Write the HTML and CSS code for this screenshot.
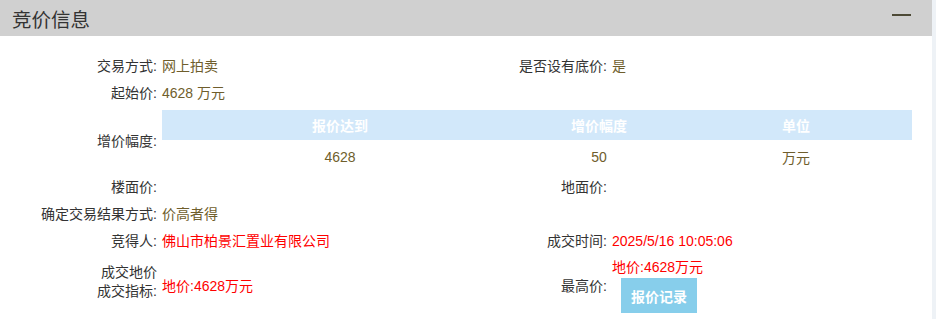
FILE: index.html
```html
<!DOCTYPE html>
<html lang="zh-CN">
<head>
  <meta charset="UTF-8">
  <title>竞价信息</title>
  <link rel="stylesheet" href="styles.css">
</head>
<body>
  <div class="painel">
    <div class="painel-topo">
      <h2>竞价信息</h2>
      <span class="recolher"></span>
    </div>

    <div class="info">
      <div class="rotulo">交易方式:</div>
      <div class="valor">网上拍卖</div>
      <div class="rotulo">是否设有底价:</div>
      <div class="valor">是</div>

      <div class="rotulo">起始价:</div>
      <div class="valor">4628 万元</div>
      <div class="rotulo"></div>
      <div class="valor"></div>

      <div class="rotulo rotulo-tabela">增价幅度:</div>
      <div class="valor-tabela">
        <table class="tabela-preco">
          <thead>
            <tr>
              <th class="col-1">报价达到</th>
              <th class="col-2">增价幅度</th>
              <th class="col-3">单位</th>
            </tr>
          </thead>
          <tbody>
            <tr>
              <td>4628</td>
              <td>50</td>
              <td>万元</td>
            </tr>
          </tbody>
        </table>
      </div>

      <div class="rotulo">楼面价:</div>
      <div class="valor"></div>
      <div class="rotulo">地面价:</div>
      <div class="valor"></div>

      <div class="rotulo">确定交易结果方式:</div>
      <div class="valor">价高者得</div>
      <div class="rotulo"></div>
      <div class="valor"></div>

      <div class="rotulo">竞得人:</div>
      <div class="valor destaque">佛山市柏景汇置业有限公司</div>
      <div class="rotulo">成交时间:</div>
      <div class="valor destaque">2025/5/16 10:05:06</div>

      <div class="rotulo rotulo-duplo">成交地价<br>成交指标:</div>
      <div class="valor destaque">地价:4628万元</div>
      <div class="rotulo">最高价:</div>
      <div class="valor maior">
        <span class="destaque">地价:4628万元</span>
        <button type="button" class="btn-registro">报价记录</button>
      </div>
    </div>
  </div>
</body>
</html>
```

FILE: styles.css
```css
body {
  margin: 0;
  font-family: "Liberation Sans", "Noto Sans CJK SC", sans-serif;
  font-size: 14px;
  color: #333;
  background-color: #eef2f6;
}

.painel {
  width: 932px;
  height: 319px;
  background-color: white;
  overflow: hidden;
}

.painel-topo {
  display: flex;
  justify-content: space-between;
  align-items: center;
  height: 36px;
  padding: 0 21px 0 12px;
  background-color: #d0d0d0;
}

.painel-topo h2 {
  margin: 0;
  font-size: 19.5px;
  font-weight: normal;
  color: #333;
}

.recolher {
  display: block;
  width: 19px;
  height: 2px;
  margin-top: -6px;
  background-color: #4d4a36;
}

.info {
  display: grid;
  grid-template-columns: 162px 300px 150px 300px;
  padding-top: 17px;
}

.rotulo {
  padding: 4px 5px 4px 0;
  line-height: 19px;
  display: flex;
  align-items: center;
  justify-content: flex-end;
  text-align: right;
}

.valor {
  padding: 4px 0;
  line-height: 19px;
  color: #6f5e2c;
  display: flex;
  align-items: center;
}

.destaque {
  color: #ff0000;
}

.rotulo-tabela {
  padding-top: 6px;
}

.valor-tabela {
  grid-column: 2 / 5;
  padding: 3px 0 0;
}

.tabela-preco {
  width: 750px;
  border-collapse: collapse;
}

.tabela-preco th {
  height: 30px;
  padding: 0;
  background-color: #d2e8fa;
  color: white;
  font-weight: bold;
}

.tabela-preco td {
  height: 34px;
  padding: 0;
  text-align: center;
  color: #6f5e2c;
}

.col-1 {
  width: 356px;
}

.col-2 {
  width: 162px;
}

.rotulo-duplo {
  padding-top: 0;
  padding-bottom: 8px;
}

.maior {
  flex-direction: column;
  align-items: flex-start;
  padding-top: 3px;
}

.btn-registro {
  margin: 1px 0 0 9px;
  width: 76px;
  height: 35px;
  border: none;
  background-color: #87ceeb;
  color: white;
  font-family: inherit;
  font-size: 14px;
  font-weight: bold;
}
```
